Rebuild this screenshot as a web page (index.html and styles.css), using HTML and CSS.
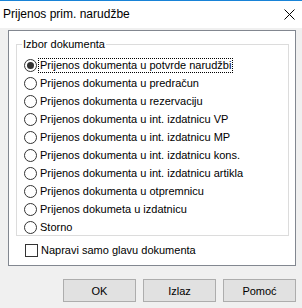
FILE: index.html
```html
<!DOCTYPE html>
<html lang="hr">
<head>
  <meta charset="UTF-8" />
  <title>Prijenos prim. narudžbe</title>
  <link rel="stylesheet" href="styles.css">
</head>
<body>
  <div class="window">
    <!-- naslov -->
    <div class="titlebar">
      <span class="title">Prijenos prim. narudžbe</span>
      <span class="close">
        <svg width="11" height="11" viewBox="0 0 11 11"><path d="M0.5 0.5 L10.5 10.5 M10.5 0.5 L0.5 10.5" stroke="#000" stroke-width="1" fill="none"/></svg>
      </span>
    </div>

    <div class="content">
      <div class="panel">
        <fieldset class="group">
          <legend>Izbor dokumenta</legend>
          <div class="options">
            <div class="opt"><span class="radio checked"></span><span class="label focus">Prijenos dokumenta u potvrde narudžbi</span></div>
            <div class="opt"><span class="radio"></span><span class="label">Prijenos dokumenta u predračun</span></div>
            <div class="opt"><span class="radio"></span><span class="label">Prijenos dokumenta u rezervaciju</span></div>
            <div class="opt"><span class="radio"></span><span class="label">Prijenos dokumenta u int. izdatnicu VP</span></div>
            <div class="opt"><span class="radio"></span><span class="label">Prijenos dokumenta u int. izdatnicu MP</span></div>
            <div class="opt"><span class="radio"></span><span class="label">Prijenos dokumenta u int. izdatnicu kons.</span></div>
            <div class="opt"><span class="radio"></span><span class="label">Prijenos dokumenta u int. izdatnicu artikla</span></div>
            <div class="opt"><span class="radio"></span><span class="label">Prijenos dokumenta u otpremnicu</span></div>
            <div class="opt"><span class="radio"></span><span class="label">Prijenos dokumeta u izdatnicu</span></div>
            <div class="opt"><span class="radio"></span><span class="label">Storno</span></div>
          </div>
        </fieldset>
        <div class="check-row"><span class="checkbox"></span><span class="label">Napravi samo glavu dokumenta</span></div>
      </div>

      <div class="buttons">
        <button class="btn">OK</button>
        <button class="btn">Izlaz</button>
        <button class="btn">Pomoć</button>
      </div>
    </div>
  </div>
</body>
</html>
```

FILE: styles.css
```css
html, body {
  margin: 0; padding: 0;
  background: #f0f0f0;
  font-family: 'Liberation Sans', Arial, sans-serif;
  font-size: 11px;
  color: #000;
}
.window {
  width: 302px;
  height: 308px;
  background: #f0f0f0;
  box-sizing: border-box;
}
.titlebar {
  height: 28px;
  box-sizing: border-box;
  border-top: 1px solid #1883d7;
  background: #fff;
  display: flex;
  align-items: center;
  justify-content: space-between;
  padding: 0 7px 1px 3px;
}
.title {
  font-size: 12px;
}
.close {
  display: flex;
}
.content {
  padding: 2px 6px 0 8px;
}
.panel {
  height: 236px;
  box-sizing: border-box;
  border: 1px solid #828790;
  background: #fff;
  padding: 7px 6px 0 7px;
}
.group {
  height: 198px;
  box-sizing: border-box;
  margin: 0;
  border: 1px solid #dcdcdc;
  padding: 5px 0 0 5px;
  min-width: 0;
}
.group legend {
  padding: 0 1px;
  line-height: 13px;
}
.options {
  display: flex;
  flex-direction: column;
  margin-left: 2px;
}
.opt, .check-row {
  height: 18px;
  display: flex;
  align-items: center;
}
.radio {
  width: 13px; height: 13px;
  box-sizing: border-box;
  border: 1px solid #333;
  border-radius: 50%;
  background: #fff;
  display: flex;
  align-items: center;
  justify-content: center;
  flex: none;
}
.radio.checked::after {
  content: "";
  width: 7px; height: 7px;
  border-radius: 50%;
  background: #333;
}
.label {
  margin-left: 1px;
  padding: 0 1px;
  line-height: 13px;
  border: 1px dotted transparent;
}
.label.focus {
  border-color: #000;
}
.check-row {
  margin: 5px 0 0 9px;
}
.checkbox {
  width: 13px; height: 13px;
  box-sizing: border-box;
  border: 1px solid #333;
  background: #fff;
  flex: none;
}
.buttons {
  display: flex;
  justify-content: flex-end;
  gap: 7px;
  margin-top: 13px;
}
.btn {
  width: 73px;
  height: 23px;
  box-sizing: border-box;
  border: 1px solid #adadad;
  background: #e1e1e1;
  font-family: 'Liberation Sans', Arial, sans-serif;
  font-size: 11px;
  color: #000;
  padding: 0;
}
```
